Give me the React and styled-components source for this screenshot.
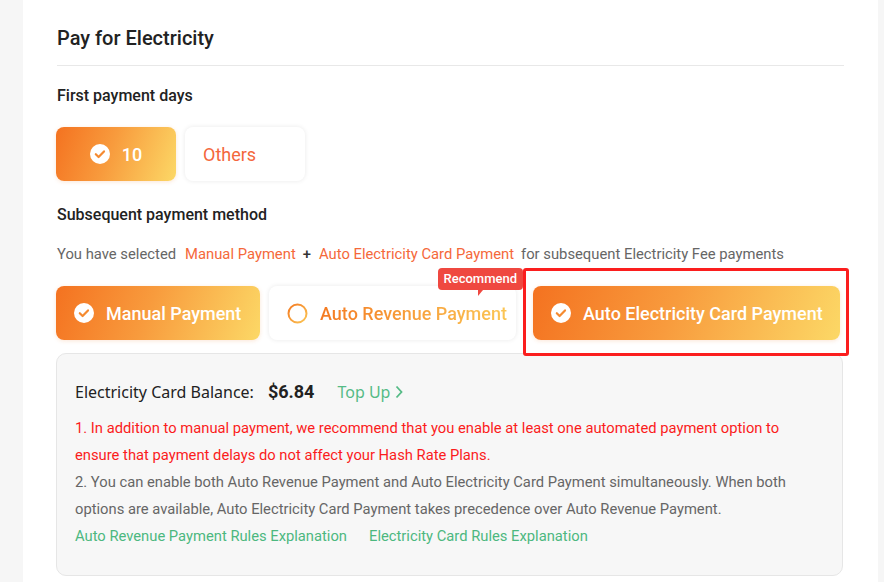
import React from "react";
import styled, { createGlobalStyle, css } from "styled-components";

const GlobalStyle = createGlobalStyle`
  html, body { margin: 0; padding: 0; }
  body {
    background: #f6f6f6;
    font-family: Roboto, "Liberation Sans", sans-serif;
    color: #222;
  }
`;

const Page = styled.div`
  display: flex;
  min-height: 582px;
  padding-left: 23px;
`;

const Panel = styled.main`
  width: 855px;
  box-sizing: border-box;
  background: #fff;
  padding: 24px 34px 0 33px;
  display: flex;
  flex-direction: column;
`;

const Title = styled.h1`
  margin: 0 0 0 1px;
  font-size: 20px;
  line-height: 28px;
  font-weight: 500;
  color: #222;
  padding-bottom: 13px;
  border-bottom: 1px solid #e8e8e8;
`;

const SectionLabel = styled.h2`
  margin: ${(p) => p.$top}px 0 0 1px;
  font-size: 16px;
  line-height: 24px;
  font-weight: 500;
  color: #222;
`;

const Row = styled.div`
  display: flex;
  align-items: center;
  gap: ${(p) => p.$gap || 9}px;
  margin-top: ${(p) => p.$top}px;
`;

const gradient = css`
  background: linear-gradient(110deg, #f47220 0%, #f89b3d 45%, #fcd866 100%);
  color: #fff;
  box-shadow: 0 1px 4px rgba(240, 120, 40, 0.18);
`;

const Option = styled.div`
  position: relative;
  box-sizing: border-box;
  width: ${(p) => p.$w}px;
  height: 54px;
  border-radius: 8px;
  display: flex;
  align-items: center;
  justify-content: ${(p) => (p.$center ? "center" : "flex-start")};
  gap: 12px;
  padding: ${(p) => (p.$center ? "0" : "0 10px 0 18px")};
  font-size: 18px;
  font-weight: 500;
  white-space: nowrap;
  svg { flex-shrink: 0; }
  ${(p) =>
    p.$active
      ? gradient
      : css`
          background: #fff;
          color: #f4673c;
          font-weight: ${p.$light ? 400 : 500};
          box-shadow: 0 0 5px rgba(0, 0, 0, 0.09);
        `}
`;

const GradText = styled.span`
  background: linear-gradient(90deg, #f47a22, #fbc655);
  -webkit-background-clip: text;
  background-clip: text;
  color: transparent;
`;

const Highlight = styled.div`
  position: relative;
  margin-left: 8px;
  &::after {
    content: "";
    position: absolute;
    top: -18px;
    bottom: -16px;
    left: -10px;
    right: -9px;
    border: 3px solid #fb1e1e;
    border-radius: 3px;
    pointer-events: none;
  }
`;

const Badge = styled.span`
  position: absolute;
  top: -18px;
  right: -7px;
  height: 22px;
  padding: 0 6px;
  border-radius: 4px;
  background: #ef4840;
  color: #fff;
  font-size: 13px;
  font-weight: 500;
  line-height: 22px;
  &::after {
    content: "";
    position: absolute;
    left: 40px;
    bottom: -6px;
    border-left: 5px solid #ef4840;
    border-bottom: 6px solid transparent;
  }
`;

const Hint = styled.p`
  margin: 16px 0 0 1px;
  font-size: 14.8px;
  line-height: 22px;
  color: #666;
`;

const Accent = styled.span`
  color: #f5683a;
  margin: 0 ${(p) => p.$mr ?? 7}px 0 ${(p) => p.$ml ?? 7}px;
`;

const Plus = styled.span`
  color: #333;
  font-weight: 500;
`;

const InfoBox = styled.section`
  margin-top: 13px;
  box-sizing: border-box;
  width: 787px;
  background: #f7f7f7;
  border: 1px solid #e6e6e6;
  border-radius: 10px;
  padding: 26px 40px 25px 18px;
`;

const BalanceRow = styled.div`
  display: flex;
  align-items: baseline;
  font-size: 16px;
  line-height: 24px;
`;

const BalanceLabel = styled.span`
  font-family: "Noto Sans", "Open Sans", sans-serif;
  color: #222;
  font-size: 16px;
`;

const Amount = styled.span`
  margin-left: 14px;
  font-size: 18px;
  font-weight: 700;
  color: #222;
`;

const TopUp = styled.a`
  margin-left: 23px;
  font-family: "Noto Sans", "Open Sans", sans-serif;
  font-size: 16px;
  color: #55bb86;
  text-decoration: none;
  display: inline-flex;
  align-items: center;
  gap: 4px;
`;

const Notes = styled.div`
  margin-top: 11px;
  font-size: 14.75px;
  line-height: 27px;
`;

const Note = styled.p`
  margin: 0;
  color: ${(p) => (p.$warn ? "#fb1c1c" : "#666")};
`;

const Links = styled.div`
  display: flex;
  gap: 22px;
`;

const Link = styled.a`
  color: #4cb87f;
  text-decoration: none;
`;

const CheckIcon = ({ size = 20 }) => (
  <svg width={size} height={size} viewBox="0 0 20 20" aria-hidden="true">
    <circle cx="10" cy="10" r="10" fill="#fff" />
    <path
      d="M5.8 10.2l2.8 2.8 5.4-5.6"
      fill="none"
      stroke="#f58a30"
      strokeWidth="2.2"
      strokeLinecap="round"
      strokeLinejoin="round"
    />
  </svg>
);

const RingIcon = () => (
  <svg width="21" height="21" viewBox="0 0 21 21" aria-hidden="true">
    <defs>
      <linearGradient id="ring" x1="0" y1="0" x2="1" y2="1">
        <stop offset="0" stopColor="#f47a22" />
        <stop offset="1" stopColor="#fbc655" />
      </linearGradient>
    </defs>
    <circle cx="10.5" cy="10.5" r="9" fill="none" stroke="url(#ring)" strokeWidth="2" />
  </svg>
);

const Chevron = () => (
  <svg width="10" height="14" viewBox="0 0 10 14" aria-hidden="true">
    <path d="M2.5 1.5l5 5.5-5 5.5" fill="none" stroke="#55bb86" strokeWidth="1.8" />
  </svg>
);

export default function App() {
  return (
    <>
      <GlobalStyle />
      <Page>
        <Panel>
          <Title>Pay for Electricity</Title>

          <SectionLabel $top={18}>First payment days</SectionLabel>
          <Row $top={19}>
            <Option $w={120} $active $center>
              <CheckIcon />
              10
            </Option>
            <Option $w={120} $light>
              Others
            </Option>
          </Row>

          <SectionLabel $top={22}>Subsequent payment method</SectionLabel>
          <Hint>
            You have selected
            <Accent $ml={9}>Manual Payment</Accent>
            <Plus>+</Plus>
            <Accent $ml={8}>Auto Electricity Card Payment</Accent>
            for subsequent Electricity Fee payments
          </Hint>

          <Row $top={21}>
            <Option $w={204} $active>
              <CheckIcon />
              Manual Payment
            </Option>
            <Option $w={247}>
              <RingIcon />
              <GradText>Auto Revenue Payment</GradText>
              <Badge>Recommend</Badge>
            </Option>
            <Highlight>
              <Option $w={307} $active>
                <CheckIcon />
                Auto Electricity Card Payment
              </Option>
            </Highlight>
          </Row>

          <InfoBox>
            <BalanceRow>
              <BalanceLabel>Electricity Card Balance:</BalanceLabel>
              <Amount>$6.84</Amount>
              <TopUp href="#">
                Top Up <Chevron />
              </TopUp>
            </BalanceRow>
            <Notes>
              <Note $warn>
                1. In addition to manual payment, we recommend that you enable at least one automated
                payment option to ensure that payment delays do not affect your Hash Rate Plans.
              </Note>
              <Note>
                2. You can enable both Auto Revenue Payment and Auto Electricity Card Payment
                simultaneously. When both options are available, Auto Electricity Card Payment takes
                precedence over Auto Revenue Payment.
              </Note>
              <Links>
                <Link href="#">Auto Revenue Payment Rules Explanation</Link>
                <Link href="#">Electricity Card Rules Explanation</Link>
              </Links>
            </Notes>
          </InfoBox>
        </Panel>
      </Page>
    </>
  );
}
